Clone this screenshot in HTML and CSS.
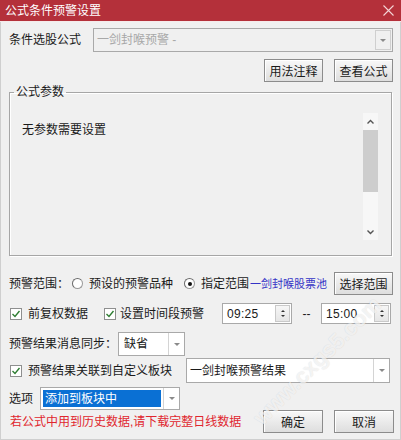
FILE: index.html
```html
<!DOCTYPE html>
<html lang="zh-CN">
  <head>
    <meta charset="UTF-8" />
    <title>公式条件预警设置</title>
    <link rel="stylesheet" href="styles.css">
  </head>
  <body>
    <div class="window">
      <div class="titlebar">
        <span class="title">公式条件预警设置</span>
        <svg class="close" width="11" height="11" viewBox="0 0 11 11">
          <path d="M0.5 0.5 L10.5 10.5 M10.5 0.5 L0.5 10.5" stroke="#f4d4d6" stroke-width="1.1" fill="none" />
        </svg>
      </div>

      <div class="content">
        <!-- 公式选择 -->
        <div class="row row-formula">
          <span class="label formula-label">条件选股公式</span>
          <div class="combo combo-disabled formula-combo">
            <span class="combo-text">一剑封喉预警 -</span>
            <span class="combo-btn"><i class="arrow"></i></span>
          </div>
        </div>

        <div class="row row-actions">
          <button class="btn">用法注释</button>
          <button class="btn">查看公式</button>
        </div>

        <!-- 公式参数 -->
        <fieldset class="group">
          <legend>公式参数</legend>
          <div class="group-body">
            <div class="param-text">无参数需要设置</div>
            <div class="vscroll">
              <div class="vs-arrow">
                <svg width="9" height="6" viewBox="0 0 9 6"><path d="M1.5 4.5 L4.5 1.5 L7.5 4.5" stroke="#555" stroke-width="1.4" fill="none" /></svg>
              </div>
              <div class="vs-thumb"></div>
              <div class="vs-track"></div>
              <div class="vs-arrow">
                <svg width="9" height="6" viewBox="0 0 9 6"><path d="M1.5 1.5 L4.5 4.5 L7.5 1.5" stroke="#555" stroke-width="1.4" fill="none" /></svg>
              </div>
            </div>
          </div>
        </fieldset>

        <!-- 预警范围 -->
        <div class="row row-range">
          <span class="label">预警范围：</span>
          <span class="radio radio-first"></span>
          <span class="radio-text">预设的预警品种</span>
          <span class="radio radio-second checked"></span>
          <span class="radio-text">指定范围</span>
          <span class="pool-name">一剑封喉股票池</span>
          <button class="btn btn-range">选择范围</button>
        </div>

        <div class="row row-check">
          <span class="checkbox first-check">
            <svg width="10" height="10" viewBox="0 0 10 10"><path d="M1.5 5 L4 7.5 L8.5 2" stroke="#2e7d32" stroke-width="1.4" fill="none" /></svg>
          </span>
          <span class="check-text">前复权数据</span>
          <span class="checkbox second-check">
            <svg width="10" height="10" viewBox="0 0 10 10"><path d="M1.5 5 L4 7.5 L8.5 2" stroke="#2e7d32" stroke-width="1.4" fill="none" /></svg>
          </span>
          <span class="check-text time-text">设置时间段预警</span>
          <div class="spin spin-start">
            <span class="spin-value">09:25</span>
            <span class="spin-btns"><i class="up"></i><i class="down"></i></span>
          </div>
          <span class="dash">--</span>
          <div class="spin">
            <span class="spin-value">15:00</span>
            <span class="spin-btns"><i class="up"></i><i class="down"></i></span>
          </div>
        </div>

        <div class="row row-sync">
          <span class="label">预警结果消息同步：</span>
          <div class="combo sync-combo">
            <span class="combo-text">缺省</span>
            <span class="combo-btn"><i class="arrow"></i></span>
          </div>
        </div>

        <div class="row row-link">
          <span class="checkbox first-check">
            <svg width="10" height="10" viewBox="0 0 10 10"><path d="M1.5 5 L4 7.5 L8.5 2" stroke="#2e7d32" stroke-width="1.4" fill="none" /></svg>
          </span>
          <span class="check-text">预警结果关联到自定义板块</span>
          <div class="combo block-combo">
            <span class="combo-text">一剑封喉预警结果</span>
            <span class="combo-btn"><i class="arrow"></i></span>
          </div>
        </div>

        <div class="row row-option">
          <span class="label">选项</span>
          <div class="combo option-combo">
            <span class="combo-text"><span class="selected">添加到板块中</span></span>
            <span class="combo-btn"><i class="arrow"></i></span>
          </div>
        </div>

        <div class="row row-bottom">
          <span class="notice">若公式中用到历史数据,请下载完整日线数据</span>
          <div class="bottom-buttons">
            <button class="btn">确定</button>
            <button class="btn">取消</button>
          </div>
        </div>
      </div>

      <div class="watermark">www.cxgs5.com</div>
    </div>
  </body>
</html>
```

FILE: styles.css
```css
* {
  box-sizing: border-box;
}

body {
  margin: 0;
  font-family: "Liberation Sans", "Noto Sans CJK SC", sans-serif;
  font-size: 12px;
  color: #1a1a1a;
  background: #fff;
}

.window {
  position: relative;
  width: 401px;
  height: 440px;
  background: #f0f0f0;
  overflow: hidden;
}

.titlebar {
  height: 22px;
  background: #b4303a;
  border-bottom: 1px solid #f6eaea;
  display: flex;
  align-items: center;
  padding-left: 5px;
  color: #fff;
}

.title {
  flex: 1;
  line-height: 14px;
}

.close {
  margin-right: 7px;
  margin-bottom: 1px;
}

.content {
  height: 418px;
  border-left: 1px solid #cfcfcf;
  border-right: 1px solid #cfcfcf;
  border-bottom: 1px solid #cfcfcf;
  padding: 6px 7px 0 7px;
}

.row {
  display: flex;
  align-items: center;
  line-height: 14px;
}

.label {
  white-space: nowrap;
  padding-left: 1px;
}

/* 下拉框 */
.combo {
  display: flex;
  align-items: stretch;
  border: 1px solid #a9a9a9;
  background: #fff;
}

.combo-text {
  flex: 1;
  display: flex;
  align-items: center;
  padding-left: 3px;
  white-space: nowrap;
  overflow: hidden;
}

.combo-btn {
  width: 16px;
  border-left: 1px solid #d4d4d4;
  display: flex;
  align-items: center;
  justify-content: center;
}

.arrow {
  width: 0;
  height: 0;
  border-left: 3px solid transparent;
  border-right: 3px solid transparent;
  border-top: 3px solid #8a8a8a;
}

.combo-disabled {
  background: #f0f0f0;
  color: #a8a8a8;
}

.row-formula {
  height: 24px;
}

.formula-label {
  width: 85px;
}

.formula-combo {
  width: 300px;
  height: 24px;
}

.formula-combo .combo-btn {
  border: 1px solid #cfcfcf;
  margin: 1px;
}

/* 按钮 */
.btn {
  height: 23px;
  width: 59px;
  padding: 0;
  font-family: inherit;
  font-size: 12px;
  color: #1a1a1a;
  border: 1px solid #8c8c8c;
  border-radius: 0;
  background: linear-gradient(#f8f8f8, #dedede);
  box-shadow: 1px 1px 0 #fff inset;
}

.row-actions {
  margin-top: 7px;
  justify-content: flex-end;
  gap: 11px;
}

/* 公式参数 */
.group {
  margin: 3px 1px 0 1px;
  padding: 0;
  height: 171px;
  border: 1px solid #a6a6a6;
  box-shadow: 1px 1px 0 #fff, 1px 1px 0 #fff inset;
}

.group legend {
  margin-left: 4px;
  padding: 0 2px;
  line-height: 14px;
}

.group-body {
  display: flex;
  align-items: flex-start;
  padding: 14px 13px 0 12px;
}

.param-text {
  flex: 1;
  margin-top: 7px;
}

.vscroll {
  width: 15px;
  height: 127px;
  display: flex;
  flex-direction: column;
  background: #f7f7f7;
}

.vs-arrow {
  height: 17px;
  display: flex;
  align-items: center;
  justify-content: center;
}

.vs-thumb {
  height: 62px;
  background: #cdcdcd;
}

.vs-track {
  flex: 1;
}

/* 预警范围 */
.row-range {
  margin-top: 15px;
  height: 25px;
}

.radio {
  width: 11px;
  height: 11px;
  border-radius: 50%;
  border: 1px solid #9a9a9a;
  border-top-color: #6a6a6a;
  border-left-color: #6a6a6a;
  background: #fff;
  display: flex;
  align-items: center;
  justify-content: center;
}

.radio.checked::after {
  content: "";
  width: 4px;
  height: 4px;
  border-radius: 50%;
  background: #111;
}

.radio-first {
  margin-left: 3px;
}

.radio-second {
  margin-left: 11px;
}

.radio-text {
  margin-left: 6px;
  white-space: nowrap;
}

.pool-name {
  color: #3434c6;
  font-size: 11px;
  margin-left: 1px;
  white-space: nowrap;
}

.btn-range {
  margin-left: auto;
}

/* 复选框 */
.row-check {
  margin-top: 7px;
  height: 21px;
}

.checkbox {
  width: 12px;
  height: 12px;
  border: 1px solid #8e8f8f;
  background: #fff;
  display: flex;
  align-items: center;
  justify-content: center;
}

.first-check {
  margin-left: 2px;
}

.second-check {
  margin-left: 16px;
}

.check-text {
  margin-left: 6px;
  white-space: nowrap;
}

.time-text {
  margin-left: 4px;
}

.spin {
  width: 70px;
  height: 21px;
  display: flex;
  border: 1px solid #a9a9a9;
  background: #fff;
}

.spin-start {
  margin-left: 18px;
}

.spin-value {
  flex: 1;
  padding-left: 4px;
  display: flex;
  align-items: center;
  letter-spacing: 0.3px;
}

.spin-btns {
  width: 15px;
  margin: 1px;
  border: 1px solid #c9c9c9;
  background: linear-gradient(#f6f6f6, #e6e6e6);
  display: flex;
  flex-direction: column;
  align-items: center;
  justify-content: center;
  gap: 3px;
}

.spin-btns .up {
  border-left: 2px solid transparent;
  border-right: 2px solid transparent;
  border-bottom: 2px solid #333;
}

.spin-btns .down {
  border-left: 2px solid transparent;
  border-right: 2px solid transparent;
  border-top: 2px solid #333;
}

.dash {
  width: 29px;
  text-align: center;
}

/* 同步 */
.row-sync {
  margin-top: 8px;
  height: 24px;
}

.sync-combo {
  margin-left: 1px;
  width: 67px;
  height: 24px;
}

.sync-combo .combo-text {
  padding-left: 5px;
}

.row-link {
  margin-top: 2px;
  height: 25px;
}

.block-combo {
  margin-left: 14px;
  width: 204px;
  height: 25px;
}

.row-option {
  margin-top: 4px;
  height: 23px;
}

.option-combo {
  margin-left: 7px;
  width: 140px;
  height: 23px;
}

.option-combo .combo-text {
  padding: 2px;
}

.selected {
  display: flex;
  align-items: center;
  width: 119px;
  height: 17px;
  padding-left: 2px;
  background: #0a70d4;
  color: #fff;
}

/* 底部 */
.row-bottom {
  height: 23px;
}

.notice {
  margin-left: 2px;
  color: #e0262e;
  white-space: nowrap;
}

.bottom-buttons {
  margin-left: auto;
  margin-right: -1px;
  display: flex;
  gap: 11px;
}

.bottom-buttons .btn {
  width: 60px;
}

.watermark {
  position: absolute;
  left: 248px;
  top: 412px;
  transform-origin: 0 0;
  transform: rotate(-45deg);
  font-size: 22px;
  font-weight: bold;
  line-height: 26px;
  color: rgba(255, 255, 255, 0.7);
  text-shadow: 0 0 1px rgba(0, 0, 0, 0.15);
  white-space: nowrap;
  pointer-events: none;
}
```
